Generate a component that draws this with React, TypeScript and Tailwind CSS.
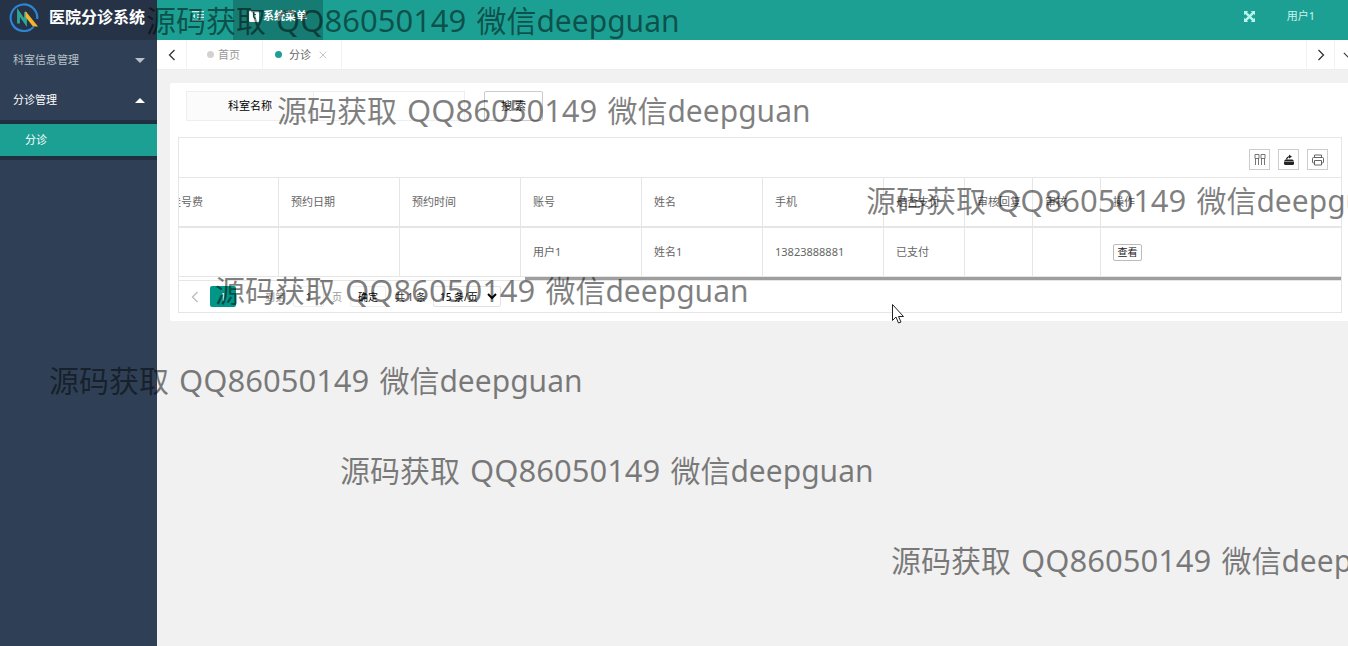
import React from "react";

const marks = [
  "left-[146px] top-0",
  "left-[277px] top-[90px]",
  "left-[866px] top-[180px]",
  "left-[215px] top-[270px]",
  "left-[49px] top-[360px]",
  "left-[340px] top-[450px]",
  "left-[891px] top-[540px]",
];

const columns = [
  { head: "挂号费", value: "", width: "w-[100px]" },
  { head: "预约日期", value: "", width: "w-[121px]" },
  { head: "预约时间", value: "", width: "w-[121px]" },
  { head: "账号", value: "用户1", width: "w-[121px]" },
  { head: "姓名", value: "姓名1", width: "w-[121px]" },
  { head: "手机", value: "13823888881", width: "w-[121px]" },
  { head: "是否支付", value: "已支付", width: "w-[81px]" },
  { head: "审核回复", value: "", width: "w-[68px]" },
  { head: "审核", value: "", width: "w-[68px]" },
];

function Logo() {
  return (
    <svg viewBox="0 0 30 30" className="size-[30px] shrink-0" aria-hidden="true">
      <path d="M24.500 25A13.300 13.300 0 1 1 28.200 17" fill="none" stroke="#2d84d2" strokeWidth="2.200" />
      <path d="M9.500 21.500V10.500L16.500 20.500V10" fill="none" stroke="#2fa596" strokeWidth="2.800" />
      <path d="M16.500 9l12.500 15.500h-5L16.500 15z" fill="#f4b42c" />
    </svg>
  );
}

function Caret({ up }: { up?: boolean }) {
  return (
    <svg viewBox="0 0 10 5" className="h-[5px] w-2.5" aria-hidden="true">
      <path d={up ? "M0 5l5-5 5 5z" : "M0 0h10L5 5z"} fill={up ? "#fff" : "#b9c0c9"} />
    </svg>
  );
}

function Chevron({ path, cls }: { path: string; cls: string }) {
  return (
    <svg viewBox="0 0 12 12" className={cls} fill="none" stroke="currentColor" strokeWidth="1.3" aria-hidden="true">
      <path d={path} />
    </svg>
  );
}

function Sidebar() {
  return (
    <aside className="flex w-[157px] shrink-0 flex-col bg-[#2f4056]">
      <div className="flex h-10 items-center gap-2.5 bg-[#263346] pb-1.5 pl-[9px]">
        <Logo />
        <h1 className="whitespace-nowrap text-base font-bold text-white">医院分诊系统</h1>
      </div>
      <nav>
        <button type="button" className="flex h-10 w-full items-center justify-between pr-3 pl-[13px] text-[#b9c0c9]">
          科室信息管理
          <Caret />
        </button>
        <button type="button" className="flex h-10 w-full items-center justify-between pr-3 pl-[13px] text-white">
          分诊管理
          <Caret up />
        </button>
        <div className="bg-[#203040] py-1">
          <a href="#triage" className="flex h-8 items-center bg-[#1ca094] pl-[25px] text-white">
            分诊
          </a>
        </div>
      </nav>
    </aside>
  );
}

function TopBar() {
  return (
    <header className="flex h-10 shrink-0 items-center bg-[#1ca094] pb-2 text-white">
      <button type="button" aria-label="折叠菜单" className="ml-[35px]">
        <svg viewBox="0 0 12 10" className="h-2.5 w-3" fill="none" stroke="#c4f0ea" strokeWidth="1.2" aria-hidden="true">
          <path d="M0 .6h12M5 3.600h7M5 6.400h7M0 9.400h12" />
          <path d="M3 2.800L.6 5 3 7.200z" fill="#c4f0ea" stroke="none" />
        </svg>
      </button>
      <a href="#menu" className="-mb-2 ml-[29px] flex h-10 w-[90px] items-center justify-center gap-1 bg-[#167c73] pb-2 font-bold">
        <svg viewBox="0 0 10 11" className="h-[11px] w-2.5" aria-hidden="true">
          <rect width="10" height="11" rx="1" fill="#fff" />
          <path d="M4.500 1v5M4.500 3.500h2.500M4.500 6l2 2" fill="none" stroke="#167c73" strokeWidth="1.2" />
        </svg>
        系统菜单
      </a>
      <button type="button" aria-label="全屏" className="ml-auto">
        <svg viewBox="0 0 11 11" className="size-[11px]" fill="#b8f4ec" aria-hidden="true">
          <path d="M0 0h4.200L3 1.200l2.500 2.600L8 1.200 6.800 0H11v4.200L9.800 3 7.200 5.500 9.800 8 11 6.800V11H6.800L8 9.800 5.500 7.200 3 9.800 4.200 11H0V6.800L1.200 8l2.600-2.500L1.200 3 0 4.200z" />
        </svg>
      </button>
      <a href="#user" className="mr-[33px] ml-8 text-[#c8f4ee]">用户1</a>
    </header>
  );
}

function TabBar() {
  return (
    <div className="flex h-[30px] shrink-0 items-stretch overflow-hidden border-b border-[#eee] bg-white">
      <button type="button" aria-label="向左" className="flex w-[30px] items-center justify-center border-r border-[#f2f2f2] text-[#333]">
        <Chevron path="M8.500 1L3.500 6l5 5" cls="size-3" />
      </button>
      <a href="#home" className="flex w-[76px] items-center gap-1 border-r border-[#f2f2f2] pl-5 text-[#999]">
        <span className="size-[7px] rounded-full bg-[#d2d2d2]" />
        首页
      </a>
      <a href="#triage" className="flex w-[79px] items-center border-r border-[#f2f2f2] pl-3 text-[#666]">
        <span className="mr-[7px] size-[7px] rounded-full bg-[#1ca094]" />
        分诊
        <Chevron path="M1 1l10 10M11 1L1 11" cls="ml-2 size-2 text-[#bbb]" />
      </a>
      <div className="-mr-3 ml-auto flex">
        <button type="button" aria-label="向右" className="flex w-7 items-center justify-center border-l border-[#f2f2f2] text-[#333]">
          <Chevron path="M3.500 1l5 5-5 5" cls="size-3" />
        </button>
        <button type="button" aria-label="更多" className="flex w-[26px] items-center justify-center border-l border-[#f2f2f2] text-[#333]">
          <Chevron path="M1 3.500l5 5 5-5" cls="size-2.5" />
        </button>
      </div>
    </div>
  );
}

function Toolbar() {
  const box = "flex h-[21px] w-[21px] items-center justify-center border border-[#ccc] text-[#555]";
  return (
    <div className="flex h-10 items-center justify-end gap-2 border-b border-[#e6e6e6] pt-1 pr-[13px]">
      <button type="button" aria-label="筛选列" className={box}>
        <svg viewBox="0 0 12 12" className="size-3" fill="none" stroke="currentColor" strokeWidth=".8" aria-hidden="true">
          <path d="M1 .5h4v4H1zM7 .5h4v4H7zM1.500 4.500V11M4.500 4.500V11M7.500 4.500V11M10.500 4.500V11" />
        </svg>
      </button>
      <button type="button" aria-label="导出" className={box}>
        <svg viewBox="0 0 12 12" className="size-3" aria-hidden="true">
          <path d="M1 7.500h10v2q0 1.500-1.500 1.500h-7Q1 11 1 9.500zM2.500 5.500h7l1.500 1.500H1z" fill="#222" />
          <path d="M3.500 5.500Q4 2.500 7 2.500" fill="none" stroke="#222" strokeWidth="1.2" />
          <path d="M6 .5L9 2.800 6 4.500z" fill="#222" />
        </svg>
      </button>
      <button type="button" aria-label="打印" className={box}>
        <svg viewBox="0 0 12 12" className="size-3" fill="none" stroke="currentColor" strokeWidth=".9" aria-hidden="true">
          <path d="M2.500 3.500V1h7v2.500M2.500 9H1.500Q.5 9 .5 8V4.500q0-1 1-1h9q1 0 1 1V8q0 1-1 1h-1M2.500 6.500h7V11h-7z" />
        </svg>
      </button>
    </div>
  );
}

function DataTable() {
  const cell = "border-r border-[#e6e6e6] px-3 text-left font-normal whitespace-nowrap";
  return (
    <div className="overflow-hidden">
      <table className="w-full table-fixed border-separate border-spacing-0">
        <thead>
          <tr className="h-[50px]">
            {columns.map((c, i) => (
              <th key={c.head} className={`${cell} ${c.width} border-b-2`}>
                {i === 0 ? <span className="-ml-[21px] block">{c.head}</span> : c.head}
              </th>
            ))}
            <th className="border-b-2 border-[#e6e6e6] px-3 text-left font-normal">操作</th>
          </tr>
        </thead>
        <tbody>
          <tr className="h-[49px]">
            {columns.map((c) => (
              <td key={c.head} className={`${cell} border-b`}>{c.value}</td>
            ))}
            <td className="border-b border-[#e6e6e6] px-3">
              <button type="button" className="block h-[17px] w-[29px] rounded-xs border border-[#bbb] text-[10px] leading-[15px] text-[#222]">
                查看
              </button>
            </td>
          </tr>
        </tbody>
      </table>
    </div>
  );
}

function Pager() {
  return (
    <div className="flex h-8 items-center border-t border-[#e6e6e6] pl-2.5 text-[10px] text-[#333]">
      <button type="button" aria-label="上一页" className="flex w-[21px] justify-start text-[#bbb]">
        <Chevron path="M8.500 1L3.500 6l5 5" cls="size-3" />
      </button>
      <button type="button" className="h-[21px] w-[26px] rounded-xs bg-[#009688] text-white">1</button>
      <label className="ml-[29px] flex items-center text-[#999]">
        到第
        <input type="text" defaultValue="1" className="mx-2 h-[21px] w-[31px] rounded-xs border border-[#eee] text-center text-[#333]" />
        页
      </label>
      <button type="button" className="ml-2 h-[21px] w-9 rounded-xs border border-[#eee] text-black">确定</button>
      <span className="ml-[9px] w-[30px] whitespace-nowrap">共 1 条</span>
      <select aria-label="每页条数" className="ml-2 h-[21px] w-[68px] rounded-xs border border-[#e2e2e2] bg-white pl-0.5 text-[10px] text-black">
        <option>15 条/页</option>
      </select>
    </div>
  );
}

export default function App() {
  return (
    <div className="relative flex min-h-screen overflow-hidden bg-[#f1f1f1] font-['Noto_Sans','Noto_Sans_CJK_SC',sans-serif] text-[11px] leading-4 text-[#666]">
      <Sidebar />
      <div className="flex min-w-0 flex-1 flex-col">
        <TopBar />
        <TabBar />
        <main className="mt-[13px] ml-[13px] rounded-l-xs bg-white pt-2 pr-1.5 pb-2 pl-2">
          <form className="ml-2 flex items-start" onSubmit={(e) => e.preventDefault()}>
            <label htmlFor="dept" className="h-[30px] w-32 border border-[#eee] bg-[#fbfbfb] text-center leading-7 text-black">
              科室名称
            </label>
            <input id="dept" type="text" className="h-[30px] w-[151px] border border-l-0 border-[#eee] px-2" />
            <button type="submit" className="ml-[19px] h-[30px] w-[59px] rounded-xs border border-[#ccc] text-[#333]">
              搜 索
            </button>
          </form>
          <section className="mt-4 border border-[#e6e6e6]">
            <Toolbar />
            <DataTable />
            <div className="flex h-[3px]">
              <div className="ml-[346px] flex-1 bg-[#9e9e9e]" />
            </div>
            <Pager />
          </section>
        </main>
      </div>

      <div className="pointer-events-none absolute inset-0 overflow-hidden" aria-hidden="true">
        {marks.map((place) => (
          <span key={place} className={`absolute text-[30px] leading-10 whitespace-nowrap text-black/50 ${place}`}>
            源码获取<span className="px-0.5 text-[31px]"> QQ86050149 </span>微信deepguan
          </span>
        ))}
        <svg viewBox="0 0 12 20" className="absolute top-[304px] left-[892px] h-5 w-3" aria-hidden="true">
          <path d="M.5.5v16l3.500-3.500 2.500 6 2.500-1-2.500-5.500h5z" fill="#fff" stroke="#222" />
        </svg>
      </div>
    </div>
  );
}
